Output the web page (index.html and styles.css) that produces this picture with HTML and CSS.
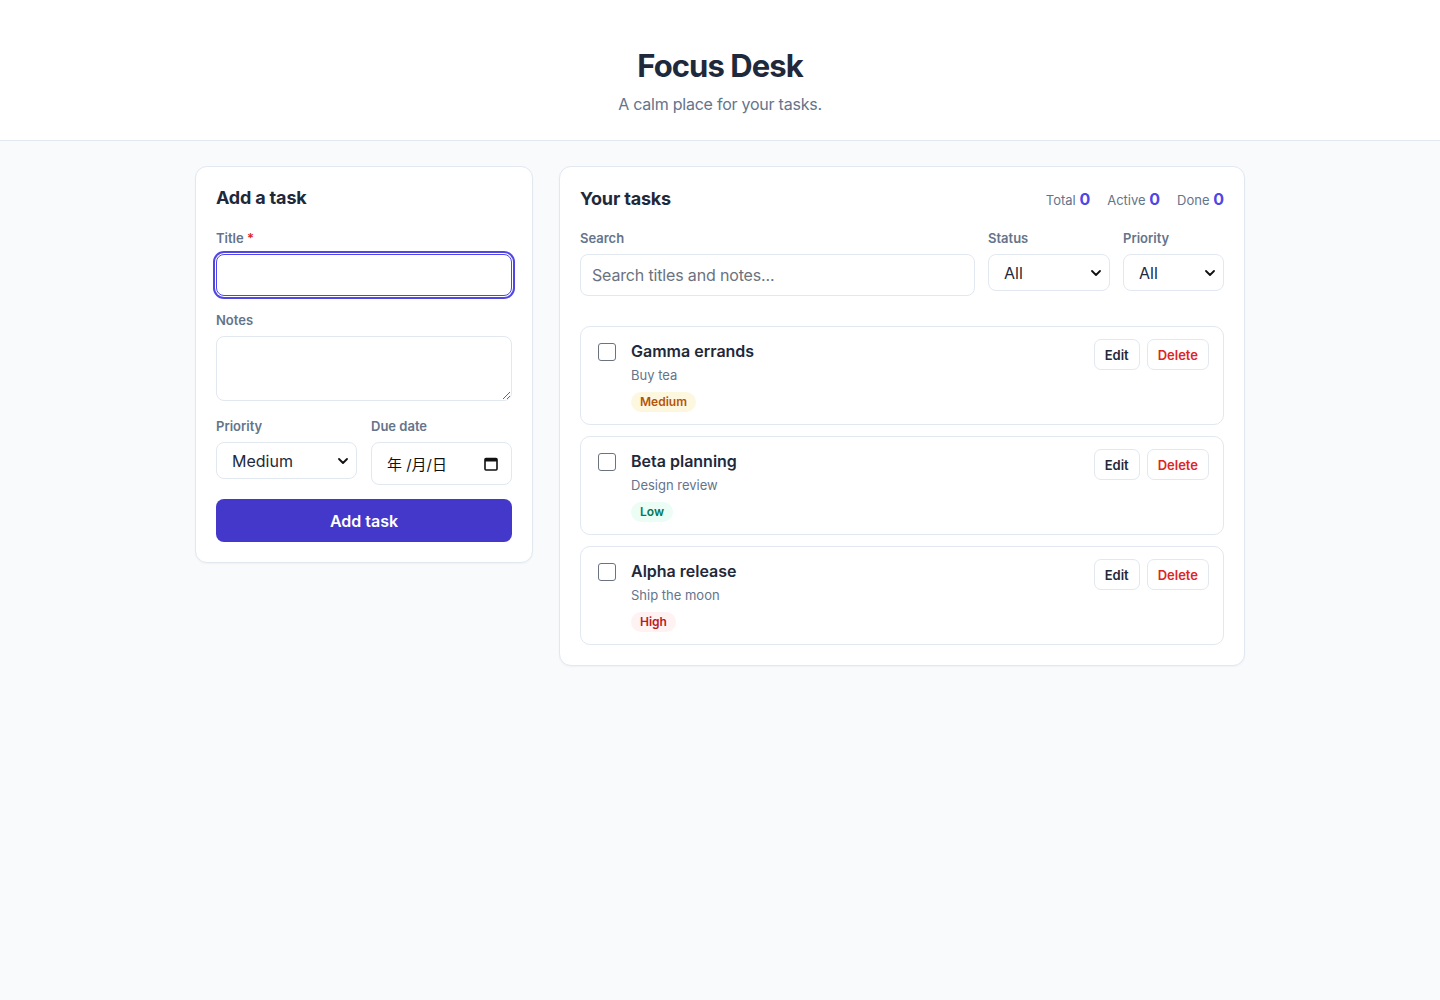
FILE: index.html
```html
<!DOCTYPE html>
<html lang="en">
<head>
    <meta charset="UTF-8">
    <meta name="viewport" content="width=device-width, initial-scale=1.0">
    <title>Focus Desk</title>
    <link rel="stylesheet" href="styles.css">
</head>
<body>
    <header class="site-header">
        <h1>Focus Desk</h1>
        <p>A calm place for your tasks.</p>
    </header>

    <main class="layout">
        <!-- new task form -->
        <section class="card">
            <h2 class="card-title">Add a task</h2>
            <form class="task-form" onsubmit="return false;">
                <div class="field">
                    <label for="title">Title <span class="req">*</span></label>
                    <input id="title" class="input" type="text" autofocus>
                </div>
                <div class="field">
                    <label for="notes">Notes</label>
                    <textarea id="notes" class="input textarea"></textarea>
                </div>
                <div class="field-row">
                    <div>
                        <label for="priority">Priority</label>
                        <select id="priority" class="select">
                            <option>Low</option>
                            <option selected>Medium</option>
                            <option>High</option>
                        </select>
                    </div>
                    <div>
                        <label for="due">Due date</label>
                        <div class="date-field" id="due">
                            <span>年 /月/日</span>
                            <svg width="16" height="16" viewBox="0 0 16 16" aria-hidden="true">
                                <rect x="2" y="2.5" width="12" height="11.5" rx="1" fill="none" stroke="#111" stroke-width="1.6"/>
                                <rect x="2" y="2.5" width="12" height="3" fill="#111"/>
                            </svg>
                        </div>
                    </div>
                </div>
                <button class="btn-primary" type="submit">Add task</button>
            </form>
        </section>

        <!-- task list -->
        <section class="card">
            <div class="list-head">
                <h2 class="card-title">Your tasks</h2>
                <div class="stats">
                    <span>Total <b>0</b></span>
                    <span>Active <b>0</b></span>
                    <span>Done <b>0</b></span>
                </div>
            </div>

            <div class="filters">
                <div>
                    <label for="search">Search</label>
                    <input id="search" class="input" type="text" placeholder="Search titles and notes...">
                </div>
                <div>
                    <label for="status">Status</label>
                    <select id="status" class="select">
                        <option>All</option>
                        <option>Active</option>
                        <option>Done</option>
                    </select>
                </div>
                <div>
                    <label for="fprio">Priority</label>
                    <select id="fprio" class="select">
                        <option>All</option>
                        <option>Low</option>
                        <option>Medium</option>
                        <option>High</option>
                    </select>
                </div>
            </div>

            <ul class="task-list">
                <li class="task">
                    <input type="checkbox" class="check">
                    <div class="task-body">
                        <div class="task-title">Gamma errands</div>
                        <div class="task-notes">Buy tea</div>
                        <span class="badge badge-medium">Medium</span>
                    </div>
                    <div class="task-actions">
                        <button class="btn-small">Edit</button>
                        <button class="btn-small danger">Delete</button>
                    </div>
                </li>
                <li class="task">
                    <input type="checkbox" class="check">
                    <div class="task-body">
                        <div class="task-title">Beta planning</div>
                        <div class="task-notes">Design review</div>
                        <span class="badge badge-low">Low</span>
                    </div>
                    <div class="task-actions">
                        <button class="btn-small">Edit</button>
                        <button class="btn-small danger">Delete</button>
                    </div>
                </li>
                <li class="task">
                    <input type="checkbox" class="check">
                    <div class="task-body">
                        <div class="task-title">Alpha release</div>
                        <div class="task-notes">Ship the moon</div>
                        <span class="badge badge-high">High</span>
                    </div>
                    <div class="task-actions">
                        <button class="btn-small">Edit</button>
                        <button class="btn-small danger">Delete</button>
                    </div>
                </li>
            </ul>
        </section>
    </main>
</body>
</html>
```

FILE: styles.css
```css
* {
    box-sizing: border-box;
}
body {
    font-family: 'Inter', 'Noto Sans CJK JP', sans-serif;
    background: #f8fafc;
    margin: 0;
    color: #1e293b;
}
.site-header {
    background: #fff;
    border-bottom: 1px solid #e2e8f0;
    text-align: center;
    padding: 46px 20px 26px;
}
.site-header h1 {
    margin: 0;
    font-size: 31px;
    line-height: 40px;
    font-weight: 700;
    letter-spacing: -0.03em;
    color: #1e293b;
}
.site-header p {
    margin: 8px 0 0;
    font-size: 16px;
    line-height: 20px;
    letter-spacing: -0.015em;
    color: #64748b;
}
.layout {
    max-width: 1050px;
    margin: 0 auto;
    padding: 25px 0;
    display: grid;
    grid-template-columns: 338px 1fr;
    gap: 26px;
    align-items: start;
}
.card {
    background: #fff;
    border: 1px solid #e2e8f0;
    border-radius: 12px;
    padding: 20px;
    box-shadow: 0 1px 2px rgba(15, 23, 42, 0.04);
}
.card-title {
    margin: 0;
    font-size: 18px;
    line-height: 22px;
    font-weight: 700;
    letter-spacing: -0.01em;
    color: #1e293b;
}
label {
    display: block;
    font-size: 13px;
    line-height: 16px;
    font-weight: 600;
    color: #64748b;
    margin-bottom: 8px;
}
.req {
    color: #dc2626;
}
.task-form {
    margin-top: 21px;
}
.field {
    margin-bottom: 16px;
}
.input {
    display: block;
    width: 100%;
    height: 42px;
    border: 1px solid #e2e8f0;
    border-radius: 8px;
    padding: 0 11px;
    font-family: inherit;
    font-size: 16px;
    color: #1e293b;
    background: #fff;
    outline: none;
}
.input::placeholder {
    color: #6b7280;
    letter-spacing: -0.01em;
}
.input:focus {
    border-color: #4f46e5;
    box-shadow: 0 0 0 1px #fff, 0 0 0 3px #4f46e5;
}
.textarea {
    height: 65px;
    padding: 10px 11px;
    resize: vertical;
}
.field-row {
    display: grid;
    grid-template-columns: 1fr 1fr;
    gap: 14px;
    margin: 17px 0 14px;
}
.select {
    display: block;
    width: 100%;
    height: 37px;
    border: 1px solid #e2e8f0;
    border-radius: 8px;
    padding: 0 28px 0 15px;
    font-family: inherit;
    font-size: 16px;
    color: #1e293b;
    background: #fff url("data:image/svg+xml;utf8,<svg xmlns='http://www.w3.org/2000/svg' width='10' height='6' viewBox='0 0 10 6'><path d='M1 1l4 4 4-4' fill='none' stroke='%23111' stroke-width='1.8' stroke-linecap='round' stroke-linejoin='round'/></svg>") no-repeat right 8px center;
    -webkit-appearance: none;
    appearance: none;
}
.date-field {
    height: 43px;
    border: 1px solid #e2e8f0;
    border-radius: 8px;
    padding: 0 12px 0 15px;
    display: flex;
    align-items: center;
    justify-content: space-between;
    font-size: 15px;
    color: #111;
}
.btn-primary {
    display: block;
    width: 100%;
    height: 43px;
    border: none;
    border-radius: 8px;
    background: #4338ca;
    color: #fff;
    font-family: inherit;
    font-size: 16px;
    font-weight: 600;
    cursor: pointer;
}
.list-head {
    display: flex;
    align-items: center;
    justify-content: space-between;
    margin: 1px 0 20px;
}
.stats {
    display: flex;
    gap: 17px;
    font-size: 13px;
    color: #64748b;
}
.stats b {
    color: #4f46e5;
    font-size: 16px;
    font-weight: 700;
}
.filters {
    display: grid;
    grid-template-columns: 1fr 122px 101px;
    gap: 13px;
    align-items: start;
}
.task-list {
    list-style: none;
    margin: 30px 0 0;
    padding: 0;
    display: flex;
    flex-direction: column;
    gap: 11px;
}
.task {
    display: flex;
    align-items: flex-start;
    border: 1px solid #e2e8f0;
    border-radius: 10px;
    padding: 13px 14px 12px 17px;
}
.check {
    -webkit-appearance: none;
    appearance: none;
    width: 18px;
    height: 18px;
    margin: 3px 15px 0 0;
    border: 1.5px solid #6b7280;
    border-radius: 3px;
    background: #fff;
    flex-shrink: 0;
}
.task-body {
    flex: 1;
}
.task-title {
    font-size: 16px;
    line-height: 22px;
    font-weight: 600;
    color: #1e293b;
}
.task-notes {
    margin-top: 4px;
    font-size: 13px;
    line-height: 18px;
    color: #64748b;
}
.badge {
    display: inline-block;
    margin-top: 8px;
    height: 20px;
    line-height: 20px;
    padding: 0 9px;
    border-radius: 999px;
    font-size: 12px;
    font-weight: 600;
}
.badge-medium {
    background: #fef7e0;
    color: #b45309;
}
.badge-low {
    background: #ecfdf5;
    color: #047857;
}
.badge-high {
    background: #fef2f2;
    color: #b91c1c;
}
.task-actions {
    display: flex;
    gap: 7px;
    margin-top: -1px;
}
.btn-small {
    height: 31px;
    padding: 0 10px;
    border: 1px solid #e2e8f0;
    border-radius: 7px;
    background: #fff;
    font-family: inherit;
    font-size: 13px;
    font-weight: 600;
    color: #1e293b;
    cursor: pointer;
}
.btn-small.danger {
    color: #dc2626;
}
```
